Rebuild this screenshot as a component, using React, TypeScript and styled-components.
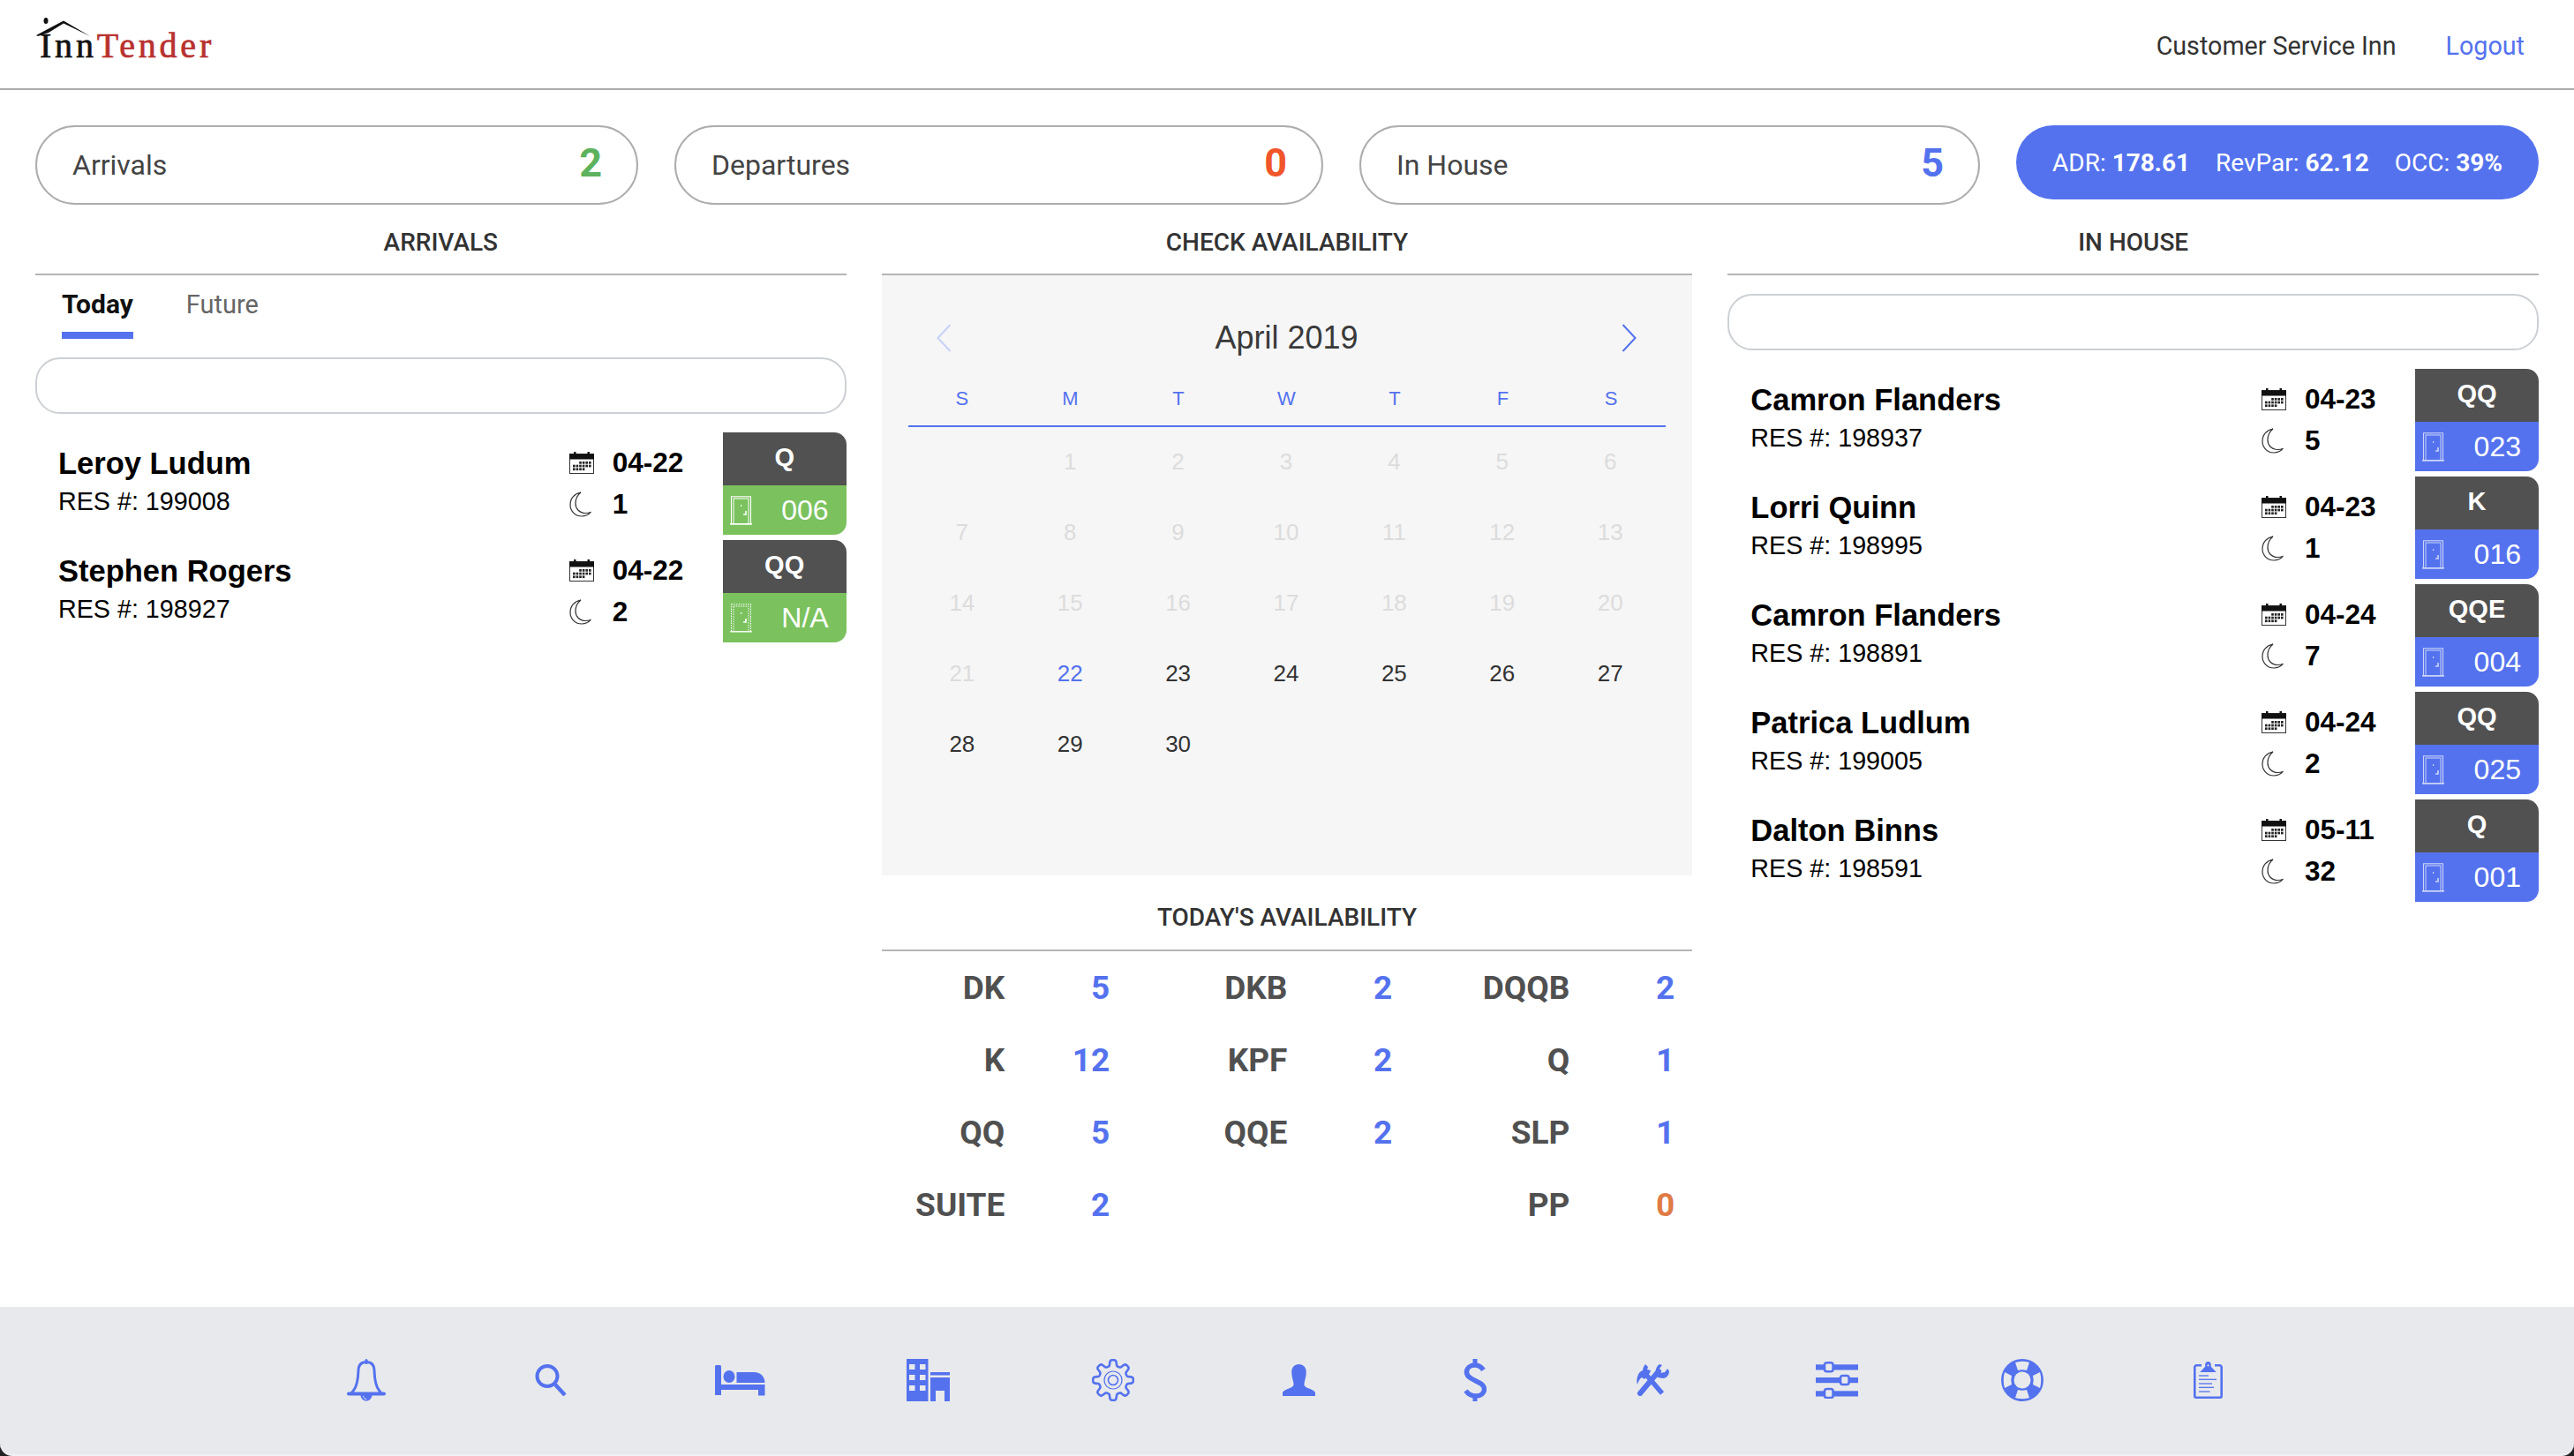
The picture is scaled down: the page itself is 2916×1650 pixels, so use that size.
import styled, { createGlobalStyle } from 'styled-components'

const BLUE = '#5472ee'
const BAR_BG = '#e8e9ed'
const ROBOTO = 'Roboto, "Liberation Sans", sans-serif'
const ARIAL = '"Liberation Sans", Arial, sans-serif'

const GlobalStyle = createGlobalStyle`
  html, body {
    margin: 0;
    padding: 0;
    background: #fff;
  }
  body {
    font-family: ${ROBOTO};
    color: #333;
  }
`

const Page = styled.div`
  width: 2916px;
  height: 1650px;
  display: flex;
  flex-direction: column;
  overflow: hidden;
`

const HeaderBar = styled.header`
  height: 100px;
  flex: none;
  border-bottom: 2px solid #adadad;
  display: flex;
  align-items: center;
  justify-content: space-between;
  padding: 0 56px 0 40px;
`

const LogoWrap = styled.div`
  position: relative;
  width: 204px;
  height: 47px;
  margin-top: 3px;
  font-family: 'Liberation Serif', serif;
  font-size: 40px;
  line-height: 47px;
  letter-spacing: 3.8px;
  white-space: nowrap;
  color: #111;
  padding-left: 5px;
  box-sizing: border-box;
  -webkit-text-stroke: 0.7px currentColor;
`

const LogoRed = styled.span`
  color: #b8312f;
`

const LogoRoof = styled.svg`
  position: absolute;
  left: 0;
  top: -8px;
`

const HeaderRight = styled.div`
  display: flex;
  align-items: center;
  gap: 56px;
  font-size: 28.7px;
  padding-top: 3px;
`

const HotelName = styled.span`
  color: #333;
`

const LogoutLink = styled.a`
  color: ${BLUE};
`

const Main = styled.main`
  padding: 40px 40px 0;
`

const StatRow = styled.div`
  display: grid;
  grid-template-columns: 683px 735px 703px 1fr;
  column-gap: 41px;
  align-items: start;
`

const StatPill = styled.div`
  height: 90px;
  box-sizing: border-box;
  border: 2px solid #adadad;
  border-radius: 45px;
  display: flex;
  align-items: center;
  justify-content: space-between;
  padding: 0 39px 0 40px;
`

const StatLabel = styled.span`
  font-size: 32px;
  color: #444;
`

const StatCount = styled.span<{ $color: string }>`
  font-size: 45px;
  font-weight: 700;
  color: ${(p) => p.$color};
  margin-top: -6px;
`

const RatesPill = styled.div`
  height: 84px;
  border-radius: 42px;
  background: ${BLUE};
  color: #fff;
  display: flex;
  align-items: center;
  justify-content: space-between;
  padding: 0 41px;
  font-size: 28px;
  white-space: nowrap;
`

const Columns = styled.div`
  display: grid;
  grid-template-columns: repeat(3, 1fr);
  column-gap: 40px;
`

const SectionTitle = styled.h2<{ $top?: number }>`
  margin: 0;
  padding: ${(p) => p.$top ?? 27}px 0 ${(p) => (p.$top ? 20 : 19)}px;
  font-size: 28px;
  line-height: 32px;
  font-weight: 500;
  text-align: center;
  color: #333;
  border-bottom: 2px solid #b5b5b5;
`

const TabBar = styled.div`
  display: flex;
  gap: 60px;
  padding-left: 30px;
`

const Tab = styled.div<{ $active?: boolean }>`
  padding: 16px 0 14px;
  font-size: ${(p) => (p.$active ? 30 : 29)}px;
  line-height: 34px;
  font-weight: ${(p) => (p.$active ? 700 : 400)};
  color: ${(p) => (p.$active ? '#111' : '#666')};
  border-bottom: 8px solid ${(p) => (p.$active ? BLUE : 'transparent')};
`

const SearchBox = styled.div`
  margin-top: 21px;
  height: 64px;
  box-sizing: border-box;
  border: 2px solid #ccd0d4;
  border-radius: 28px;
`

const GuestList = styled.div`
  margin-top: 21px;
  display: flex;
  flex-direction: column;
  gap: 6px;
`

const GuestRow = styled.div`
  display: grid;
  grid-template-columns: 1fr 174px 140px;
  height: 116px;
`

const GuestInfo = styled.div`
  padding: 13px 0 0 26px;
  font-family: ${ARIAL};
  color: #000;
`

const GuestName = styled.div`
  font-size: 34.5px;
  line-height: 44px;
  font-weight: 700;
`

const GuestRes = styled.div`
  font-size: 28.7px;
  line-height: 42px;
`

const GuestMeta = styled.div`
  padding-top: 12px;
  font-family: ${ARIAL};
  font-size: 31.5px;
  font-weight: 700;
  color: #000;
`

const MetaLine = styled.div<{ $shift?: number }>`
  display: flex;
  align-items: center;
  height: 44px;
  margin-top: ${(p) => p.$shift ?? 0}px;
`

const MetaIcon = styled.span`
  display: flex;
  width: 49px;
`

const Badge = styled.div`
  display: flex;
  flex-direction: column;
  border-radius: 0 14px 14px 0;
  overflow: hidden;
  font-family: ${ARIAL};
  color: #fff;
`

const BadgeType = styled.div`
  height: 60px;
  display: flex;
  align-items: center;
  justify-content: center;
  padding-bottom: 3px;
  box-sizing: border-box;
  background: #515151;
  font-size: 29px;
  font-weight: 700;
`

const BadgeRoom = styled.div<{ $color: string }>`
  height: 56px;
  display: flex;
  align-items: center;
  justify-content: space-between;
  padding: 0 20px 0 8px;
  background: ${(p) => p.$color};
  font-size: 32px;
`

const CalendarPanel = styled.div`
  height: 680px;
  background: #f6f6f6;
  padding: 0 30px;
  box-sizing: border-box;
  font-family: ${ARIAL};
`

const MonthRow = styled.div`
  display: flex;
  align-items: center;
  justify-content: space-between;
  padding: 49px 33px 0 32px;
  height: 44px;
  box-sizing: content-box;
  font-size: 36px;
  color: #3a3a3a;
`

const WeekRow = styled.div`
  display: grid;
  grid-template-columns: repeat(7, 1fr);
  margin-top: 32px;
  padding: 0 1px 15px 0;
  border-bottom: 2px solid ${BLUE};
`

const WeekDay = styled.div`
  font-size: 22px;
  line-height: 30px;
  text-align: center;
  color: ${BLUE};
`

const DayGrid = styled.div`
  display: grid;
  grid-template-columns: repeat(7, 1fr);
  grid-auto-rows: 80px;
  margin-top: -1px;
  padding-right: 2px;
`

const DayCell = styled.div<{ $state: 'off' | 'today' | 'open' }>`
  display: flex;
  align-items: center;
  justify-content: center;
  font-size: 26px;
  color: ${(p) => (p.$state === 'off' ? '#dcdcdc' : p.$state === 'today' ? BLUE : '#333')};
`

const AvailGrid = styled.div`
  display: grid;
  grid-template-columns: 1fr 320px 320px;
  grid-auto-rows: 82px;
  padding-right: 20px;
`

const AvailCell = styled.div`
  display: grid;
  grid-template-columns: 1fr 119px;
  align-items: center;
  text-align: right;
  font-size: 37px;
  font-weight: 700;
  white-space: nowrap;
`

const AvailLabel = styled.span`
  color: #505050;
`

const AvailCount = styled.span<{ $color: string }>`
  color: ${(p) => p.$color};
`

const BottomEdge = styled.div`
  margin-top: auto;
  flex: none;
  background: #222;
`

const BottomBar = styled.nav`
  height: 169px;
  background: ${BAR_BG};
  border-bottom: 2px solid #f1f1f4;
  border-radius: 0 0 14px 14px;
  display: flex;
  padding: 59px 0 0 392px;
  box-sizing: border-box;
`

const BarSlot = styled.div<{ $gap: number }>`
  height: 48px;
  margin-left: ${(p) => p.$gap}px;
  display: flex;
  align-items: center;
`

function buildGearPath(): string {
  let d = ''
  for (let i = 0; i < 240; i++) {
    const a = (i / 240) * Math.PI * 2
    const r = 19.5 + 3.4 * Math.tanh(2.2 * Math.cos(8 * a))
    const x = 24 + r * Math.sin(a)
    const y = 24 - r * Math.cos(a)
    d += `${i === 0 ? 'M' : 'L'}${x.toFixed(2)} ${y.toFixed(2)}`
  }
  return d + 'Z'
}

const GEAR_PATH = buildGearPath()

function CalendarIcon() {
  const cells = []
  for (let r = 0; r < 3; r++) {
    for (let c = 0; c < 6; c++) {
      if (r === 0 && c < 2) continue
      if (r === 2 && c > 3) continue
      cells.push(<rect key={`${r}-${c}`} x={4 + c * 3.6} y={11 + r * 3.7} width="2.6" height="2.7" fill="#222" />)
    }
  }
  return (
    <svg width="28" height="25" viewBox="0 0 28 25">
      <rect x="0.5" y="2.5" width="27" height="22" fill="#fff" stroke="#333" />
      <rect x="0" y="2.5" width="28" height="6" fill="#111" />
      <rect x="5" y="0" width="2.5" height="4" fill="#111" />
      <rect x="20.5" y="0" width="2.5" height="4" fill="#111" />
      {cells}
    </svg>
  )
}

function MoonIcon() {
  return (
    <svg width="26" height="29" viewBox="0 0 26 29">
      <path
        d="M13 1C5.5 2.5 1 8 1 15c0 7.5 6 13 13 13 4.5 0 8-2 10.5-4.8-2 .9-4.2 1.3-6.3 1.3C11.5 24.5 7 19.5 7 13.500 7 8.500 9.200 4 13 1z"
        fill="none"
        stroke="#333"
        strokeWidth="1.2"
      />
    </svg>
  )
}

function DoorIcon({ dotted, faded }: { dotted?: boolean; faded?: boolean }) {
  const dash = dotted ? '1.5 1.2' : undefined
  return (
    <svg width="25" height="33" viewBox="0 0 25 33" opacity={faded ? 0.7 : 1}>
      <rect x="1.5" y="0.8" width="22" height="31" fill="none" stroke="#fff" strokeWidth="1.1" strokeDasharray={dash} />
      <rect x="4" y="3" width="17" height="28.5" fill="none" stroke="#fff" strokeWidth="1" strokeDasharray={dash} />
      <rect x="0" y="31" width="25" height="1.6" fill="#fff" opacity={dotted ? 0.7 : 1} />
      <rect x="12" y="10" width="1.2" height="2" fill="#fff" />
      <path d="M15 21h3v-4" fill="none" stroke="#fff" strokeWidth="1.6" />
    </svg>
  )
}

function LeftChevron({ color }: { color: string }) {
  return (
    <svg width="17" height="32" viewBox="0 0 17 32">
      <path d="M15.5 1L1.5 16l14 15" fill="none" stroke={color} strokeWidth="2" />
    </svg>
  )
}

function RightChevron({ color }: { color: string }) {
  return (
    <svg width="17" height="32" viewBox="0 0 17 32">
      <path d="M1.5 1l14 15-14 15" fill="none" stroke={color} strokeWidth="2" />
    </svg>
  )
}

function BellIcon() {
  return (
    <svg width="46" height="48" viewBox="0 0 46 48">
      <rect x="21.5" y="0" width="3" height="6" rx="1.5" fill={BLUE} />
      <path
        d="M23 3.5c-6 0-8.800 3.700-9 9.500-.3 10-1.200 18-6 23.500-1 1.200-2 2-2 3h34c0-1-1-1.800-2-3-4.800-5.500-5.700-13.500-6-23.500-.2-5.800-3-9.500-9-9.500z"
        fill="none"
        stroke={BLUE}
        strokeWidth="3"
        strokeLinejoin="round"
      />
      <path d="M3 39.5h40" stroke={BLUE} strokeWidth="4" strokeLinecap="round" />
      <path d="M16.5 41c.3 4 3 6.500 6.500 6.500s6.200-2.500 6.500-6.500z" fill={BLUE} />
      <path d="M19.5 42c.5 2.300 2 3.500 3.800 3.800" fill="none" stroke={BAR_BG} strokeWidth="1" />
    </svg>
  )
}

function SearchIcon() {
  return (
    <svg width="36" height="36" viewBox="0 0 36 36">
      <circle cx="14" cy="13.5" r="11.5" fill="none" stroke={BLUE} strokeWidth="4" />
      <path d="M23 23l11 12" stroke={BLUE} strokeWidth="4.5" />
    </svg>
  )
}

function BedIcon() {
  return (
    <svg width="57" height="35" viewBox="0 0 57 35" fill={BLUE}>
      <path d="M0 1.5C0 .7.7 0 1.5 0h4C6.3 0 7 .7 7 1.5V34H0z" />
      <ellipse cx="16" cy="13" rx="6.5" ry="7" />
      <path d="M24.5 8h20c7 0 12 5 12 12H24.5z" />
      <path d="M7 22h49.5v12.5h-7.5V28H7z" />
    </svg>
  )
}

function BuildingIcon() {
  return (
    <svg width="49" height="48" viewBox="0 0 49 48" fill={BLUE}>
      <path
        fillRule="evenodd"
        d="M0 0h24.500v48H0zM3 6v6h6.500V6zm12 0v6h6.500V6zM3 18v6h6.500v-6zm12 0v6h6.500v-6zM3 30v6h6.500v-6zm12 0v6h6.500v-6z"
      />
      <rect x="27" y="15" width="22" height="3.5" />
      <path d="M27 21h22v27h-6V36H33v12h-6z" />
    </svg>
  )
}

function GearIcon() {
  return (
    <svg width="48" height="48" viewBox="0 0 48 48" fill="none" stroke={BLUE}>
      <path d={GEAR_PATH} strokeWidth="2.6" strokeLinejoin="round" />
      <circle cx="24" cy="24" r="10" strokeWidth="1.2" />
      <circle cx="24" cy="24" r="5.5" strokeWidth="1.6" />
    </svg>
  )
}

function PersonIcon() {
  return (
    <svg width="37" height="36" viewBox="0 0 37 36">
      <path
        d="M18.5 0c5 0 8.300 3.500 8.300 9 0 5-1.800 9.500-2.300 13-.4 2.800 1.500 4 5.500 5.500 4 1.600 7 3 7 5.500v3H0v-3c0-2.500 3-3.900 7-5.500 4-1.500 5.900-2.700 5.500-5.500-.5-3.500-2.300-8-2.300-13 0-5.500 3.300-9 8.300-9z"
        fill={BLUE}
      />
    </svg>
  )
}

function DollarIcon() {
  return (
    <svg width="26" height="48" viewBox="0 0 26 48" fill="none">
      <rect x="10.5" y="0" width="5" height="7" fill={BLUE} />
      <rect x="10.5" y="41" width="5" height="7" fill={BLUE} />
      <path
        d="M22.5 12.500C20 8.800 16.800 7 13 7 7.500 7 3.500 10.300 3.500 15c0 5 4.500 7 9.500 9.500 5.800 2.800 10.500 4.800 10.500 9.800 0 4.500-4 7.700-9.500 7.700-4.700 0-8.700-2-11.500-6"
        stroke={BLUE}
        strokeWidth="5.5"
      />
    </svg>
  )
}

function ToolsIcon() {
  return (
    <svg width="39" height="36" viewBox="0 0 39 36" fill={BLUE}>
      <path d="M6 33L27 8" stroke={BLUE} strokeWidth="6" strokeLinecap="round" />
      <path d="M13 12l18 21" stroke={BLUE} strokeWidth="5.5" />
      <path d="M12 0l3 3-1 3 4 1-1 3-6 7-3-2c-2 1-4 4-5 8-1.500-4-.5-12 4-15l2-1c0-2 1-5 3-7z" />
      <path d="M28 0l3 1-4 5 2 4 5-1 3-4 2 3c0 4-3 8-7 8l-6-1-2-5c-1-4 1-8 4-10z" />
    </svg>
  )
}

function SlidersIcon() {
  const knob = (x: number, y: number) => (
    <rect x={x} y={y} width="9.6" height="10" rx="2.5" fill={BAR_BG} stroke={BLUE} strokeWidth="2.6" />
  )
  return (
    <svg width="48" height="42" viewBox="0 0 48 42" fill={BLUE}>
      <rect y="3.3" width="48" height="6.2" />
      <rect y="18" width="48" height="6.2" />
      <rect y="33.3" width="48" height="6.2" />
      {knob(10, 1.3)}
      {knob(28, 16)}
      {knob(10, 31)}
    </svg>
  )
}

function LifebuoyIcon() {
  return (
    <svg width="48" height="48" viewBox="0 0 48 48">
      <circle cx="24" cy="24" r="24" fill={BLUE} />
      <circle cx="24" cy="24" r="9.5" fill={BAR_BG} />
      <g fill={BAR_BG}>
        <path d="M16 4q8-2.500 16 0l-3 9q-5-1.500-10 0z" />
        <path d="M16 44q8 2.500 16 0l-3-9q-5 1.500-10 0z" />
        <path d="M4 15q-2.500 9 0 18l8-4q-1.500-5 0-10z" />
        <path d="M44 15q2.500 9 0 18l-8-4q1.500-5 0-10z" />
      </g>
    </svg>
  )
}

function ClipboardIcon() {
  return (
    <svg width="33" height="42" viewBox="0 0 33 42" fill="none">
      <path
        d="M9 4.300H3.500C2.300 4.300 1.300 5.300 1.300 6.500v32.700c0 1.200 1 1.500 2.200 1.500h26c1.200 0 2.200-.3 2.200-1.500V6.500c0-1.200-1-2.200-2.200-2.200H24"
        stroke={BLUE}
        strokeWidth="2.6"
      />
      <path d="M16.500 0c2 0 3.300 1.500 3.300 3.300v2.500l6 6.200H7.200l6-6.200V3.300C13.200 1.500 14.500 0 16.500 0z" fill={BLUE} />
      <circle cx="16.5" cy="4.3" r="1.1" fill={BAR_BG} />
      <g stroke={BLUE} strokeWidth="1.3">
        <path d="M6 16h11" />
        <path d="M6 20.300h20" />
        <path d="M6 25h15" />
        <path d="M6 29.300h17" />
        <path d="M6 34h12.500" />
      </g>
    </svg>
  )
}

const weekDays = ['S', 'M', 'T', 'W', 'T', 'F', 'S']

const arrivals = [
  { name: 'Leroy Ludum', res: '199008', date: '04-22', nights: 1, type: 'Q', room: '006' },
  { name: 'Stephen Rogers', res: '198927', date: '04-22', nights: 2, type: 'QQ', room: 'N/A' },
]

const inHouse = [
  { name: 'Camron Flanders', res: '198937', date: '04-23', nights: 5, type: 'QQ', room: '023' },
  { name: 'Lorri Quinn', res: '198995', date: '04-23', nights: 1, type: 'K', room: '016' },
  { name: 'Camron Flanders', res: '198891', date: '04-24', nights: 7, type: 'QQE', room: '004' },
  { name: 'Patrica Ludlum', res: '199005', date: '04-24', nights: 2, type: 'QQ', room: '025' },
  { name: 'Dalton Binns', res: '198591', date: '05-11', nights: 32, type: 'Q', room: '001' },
]

const availability: Array<[string, number] | null> = [
  ['DK', 5], ['DKB', 2], ['DQQB', 2],
  ['K', 12], ['KPF', 2], ['Q', 1],
  ['QQ', 5], ['QQE', 2], ['SLP', 1],
  ['SUITE', 2], null, ['PP', 0],
]

const barIcons = [
  { Icon: BellIcon, gap: 0 },
  { Icon: SearchIcon, gap: 168 },
  { Icon: BedIcon, gap: 167.5 },
  { Icon: BuildingIcon, gap: 160 },
  { Icon: GearIcon, gap: 161.5 },
  { Icon: PersonIcon, gap: 167.5 },
  { Icon: DollarIcon, gap: 168.5 },
  { Icon: ToolsIcon, gap: 167.5 },
  { Icon: SlidersIcon, gap: 166.5 },
  { Icon: LifebuoyIcon, gap: 162 },
  { Icon: ClipboardIcon, gap: 169.5 },
]

interface Guest {
  name: string
  res: string
  date: string
  nights: number
  type: string
  room: string
}

function GuestEntry({ guest, color }: { guest: Guest; color: string }) {
  const faded = color === BLUE
  return (
    <GuestRow>
      <GuestInfo>
        <GuestName>{guest.name}</GuestName>
        <GuestRes>RES #: {guest.res}</GuestRes>
      </GuestInfo>
      <GuestMeta>
        <MetaLine>
          <MetaIcon><CalendarIcon /></MetaIcon>
          {guest.date}
        </MetaLine>
        <MetaLine $shift={3}>
          <MetaIcon><MoonIcon /></MetaIcon>
          {guest.nights}
        </MetaLine>
      </GuestMeta>
      <Badge>
        <BadgeType>{guest.type}</BadgeType>
        <BadgeRoom $color={color}>
          <DoorIcon dotted={guest.room === 'N/A'} faded={faded} />
          {guest.room}
        </BadgeRoom>
      </Badge>
    </GuestRow>
  )
}

export default function App() {
  const days: Array<number | null> = [null]
  for (let d = 1; d <= 30; d++) days.push(d)

  return (
    <Page>
      <GlobalStyle />
      <HeaderBar>
        <LogoWrap>
          <LogoRoof width="70" height="30" viewBox="0 0 70 30">
            <ellipse cx="12" cy="3.5" rx="2.5" ry="3.5" fill="#111" />
            <path d="M1 20L14 13 32 3.5 62 21 32 6.500 15 17 3 21z" fill="#111" />
          </LogoRoof>
          Inn<LogoRed>Tender</LogoRed>
        </LogoWrap>
        <HeaderRight>
          <HotelName>Customer Service Inn</HotelName>
          <LogoutLink>Logout</LogoutLink>
        </HeaderRight>
      </HeaderBar>

      <Main>
        <StatRow>
          <StatPill>
            <StatLabel>Arrivals</StatLabel>
            <StatCount $color="#5cb25d">2</StatCount>
          </StatPill>
          <StatPill>
            <StatLabel>Departures</StatLabel>
            <StatCount $color="#f0562a">0</StatCount>
          </StatPill>
          <StatPill>
            <StatLabel>In House</StatLabel>
            <StatCount $color={BLUE}>5</StatCount>
          </StatPill>
          <RatesPill>
            <span>ADR: <b>178.61</b></span>
            <span>RevPar: <b>62.12</b></span>
            <span>OCC: <b>39%</b></span>
          </RatesPill>
        </StatRow>

        <Columns>
          <section>
            <SectionTitle>ARRIVALS</SectionTitle>
            <TabBar>
              <Tab $active>Today</Tab>
              <Tab>Future</Tab>
            </TabBar>
            <SearchBox />
            <GuestList>
              {arrivals.map((g) => (
                <GuestEntry key={g.res} guest={g} color="#7bc25e" />
              ))}
            </GuestList>
          </section>

          <section>
            <SectionTitle>CHECK AVAILABILITY</SectionTitle>
            <CalendarPanel>
              <MonthRow>
                <LeftChevron color="#c6d2f8" />
                April 2019
                <RightChevron color={BLUE} />
              </MonthRow>
              <WeekRow>
                {weekDays.map((d, i) => (
                  <WeekDay key={i}>{d}</WeekDay>
                ))}
              </WeekRow>
              <DayGrid>
                {days.map((d, i) => (
                  <DayCell key={i} $state={d === null || d < 22 ? 'off' : d === 22 ? 'today' : 'open'}>
                    {d}
                  </DayCell>
                ))}
              </DayGrid>
            </CalendarPanel>
            <SectionTitle $top={32}>TODAY'S AVAILABILITY</SectionTitle>
            <AvailGrid>
              {availability.map((a, i) =>
                a ? (
                  <AvailCell key={a[0]}>
                    <AvailLabel>{a[0]}</AvailLabel>
                    <AvailCount $color={a[1] === 0 ? '#e07b45' : BLUE}>{a[1]}</AvailCount>
                  </AvailCell>
                ) : (
                  <div key={i} />
                ),
              )}
            </AvailGrid>
          </section>

          <section>
            <SectionTitle>IN HOUSE</SectionTitle>
            <SearchBox />
            <GuestList>
              {inHouse.map((g) => (
                <GuestEntry key={g.res} guest={g} color={BLUE} />
              ))}
            </GuestList>
          </section>
        </Columns>
      </Main>

      <BottomEdge>
        <BottomBar>
          {barIcons.map(({ Icon, gap }, i) => (
            <BarSlot key={i} $gap={gap}>
              <Icon />
            </BarSlot>
          ))}
        </BottomBar>
      </BottomEdge>
    </Page>
  )
}
